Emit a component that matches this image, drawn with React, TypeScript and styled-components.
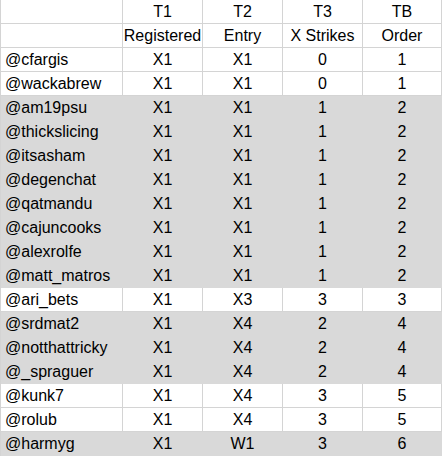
import React from "react";
import styled, { createGlobalStyle } from "styled-components";

type Row = {
    handle: string;
    registered: string;
    entry: string;
    strikes: number;
    order: number;
    shaded: boolean;
};

const rows: Row[] = [
    { handle: "@cfargis", registered: "X1", entry: "X1", strikes: 0, order: 1, shaded: false },
    { handle: "@wackabrew", registered: "X1", entry: "X1", strikes: 0, order: 1, shaded: false },
    { handle: "@am19psu", registered: "X1", entry: "X1", strikes: 1, order: 2, shaded: true },
    { handle: "@thickslicing", registered: "X1", entry: "X1", strikes: 1, order: 2, shaded: true },
    { handle: "@itsasham", registered: "X1", entry: "X1", strikes: 1, order: 2, shaded: true },
    { handle: "@degenchat", registered: "X1", entry: "X1", strikes: 1, order: 2, shaded: true },
    { handle: "@qatmandu", registered: "X1", entry: "X1", strikes: 1, order: 2, shaded: true },
    { handle: "@cajuncooks", registered: "X1", entry: "X1", strikes: 1, order: 2, shaded: true },
    { handle: "@alexrolfe", registered: "X1", entry: "X1", strikes: 1, order: 2, shaded: true },
    { handle: "@matt_matros", registered: "X1", entry: "X1", strikes: 1, order: 2, shaded: true },
    { handle: "@ari_bets", registered: "X1", entry: "X3", strikes: 3, order: 3, shaded: false },
    { handle: "@srdmat2", registered: "X1", entry: "X4", strikes: 2, order: 4, shaded: true },
    { handle: "@notthattricky", registered: "X1", entry: "X4", strikes: 2, order: 4, shaded: true },
    { handle: "@_spraguer", registered: "X1", entry: "X4", strikes: 2, order: 4, shaded: true },
    { handle: "@kunk7", registered: "X1", entry: "X4", strikes: 3, order: 5, shaded: false },
    { handle: "@rolub", registered: "X1", entry: "X4", strikes: 3, order: 5, shaded: false },
    { handle: "@harmyg", registered: "X1", entry: "W1", strikes: 3, order: 6, shaded: true },
];

const GlobalStyle = createGlobalStyle`
    body {
        margin: 0;
        background: #fff;
        font-family: "Liberation Sans", Arial, sans-serif;
    }
`;

const Sheet = styled.div`
    display: grid;
    grid-template-columns: 122px 80px 80px 80px 79px;
    grid-auto-rows: 24px;
    width: 442px;
    border-left: 1px solid #d4d4d4;
`;

const Cell = styled.div<{ $shaded?: boolean; $left?: boolean }>`
    box-sizing: border-box;
    display: flex;
    align-items: center;
    justify-content: ${(p) => (p.$left ? "flex-start" : "center")};
    padding: 1px ${(p) => (p.$left ? "0 0 4px" : "0 0 0")};
    border-right: 1px solid ${(p) => (p.$shaded ? "#d9d9d9" : "#d4d4d4")};
    border-bottom: 1px solid ${(p) => (p.$shaded ? "#d9d9d9" : "#d4d4d4")};
    background: ${(p) => (p.$shaded ? "#d9d9d9" : "#fff")};
    color: #000;
    font-size: 16px;
    white-space: nowrap;
`;

const headers = [
    ["", "T1", "T2", "T3", "TB"],
    ["", "Registered", "Entry", "X Strikes", "Order"],
];

export default function App() {
    return (
        <>
            <GlobalStyle />
            <Sheet>
                {headers.map((line, i) =>
                    line.map((text, j) => (
                        <Cell key={`h${i}-${j}`} $left={j === 0}>
                            {text}
                        </Cell>
                    ))
                )}
                {rows.map((r) => (
                    <React.Fragment key={r.handle}>
                        <Cell $shaded={r.shaded} $left>{r.handle}</Cell>
                        <Cell $shaded={r.shaded}>{r.registered}</Cell>
                        <Cell $shaded={r.shaded}>{r.entry}</Cell>
                        <Cell $shaded={r.shaded}>{r.strikes}</Cell>
                        <Cell $shaded={r.shaded}>{r.order}</Cell>
                    </React.Fragment>
                ))}
            </Sheet>
        </>
    );
}
